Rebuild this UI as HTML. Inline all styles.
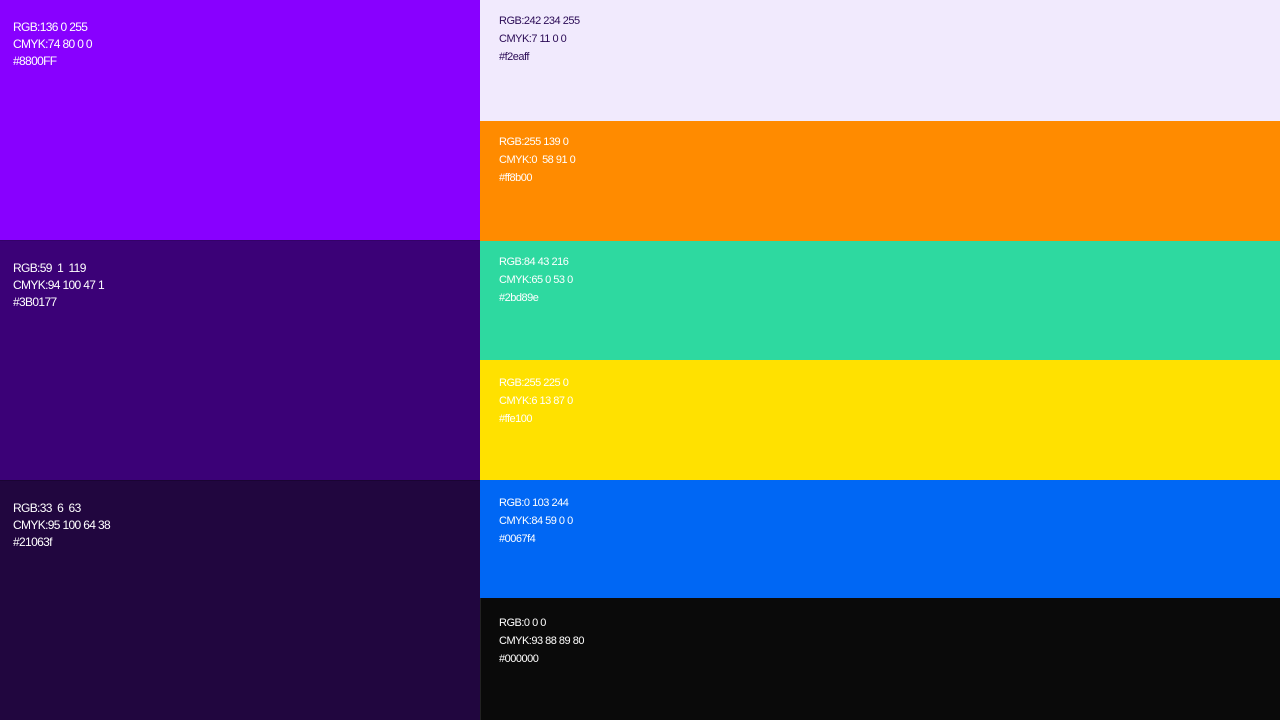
<!DOCTYPE html>
<html><head><style>
body{margin:0;width:1280px;height:720px;position:relative;overflow:hidden;font-family:"Liberation Sans",sans-serif;}
.b{position:absolute;box-sizing:border-box;}
.l{left:0;width:480px;height:240px;padding:19px 0 0 13px;font-size:12px;line-height:17px;color:#fff;letter-spacing:-0.65px}
.r{left:480px;width:800px;padding:12px 0 0 19px;font-size:11px;line-height:18px;color:#fff;letter-spacing:-0.5px}
</style></head><body>
<div class="b l" style="top:0;background:#8800ff">RGB:136 0 255<br>CMYK:74 80 0 0<br>#8800FF</div>
<div class="b l" style="top:240px;background:#3b0177;border-top:1px solid #330168">RGB:59&nbsp; 1&nbsp; 119<br>CMYK:94 100 47 1<br>#3B0177</div>
<div class="b l" style="top:480px;background:#21063f;border-top:1px solid #1a0433">RGB:33&nbsp; 6&nbsp; 63<br>CMYK:95 100 64 38<br>#21063f</div>
<div class="b r" style="top:0;height:121px;background:#f1eafd;color:#2a0a55">RGB:242 234 255<br>CMYK:7 11 0 0<br>#f2eaff</div>
<div class="b r" style="top:121px;height:120px;background:#ff8b00">RGB:255 139 0<br>CMYK:0&nbsp; 58 91 0<br>#ff8b00</div>
<div class="b r" style="top:241px;height:119px;background:#2ed9a0">RGB:84 43 216<br>CMYK:65 0 53 0<br>#2bd89e</div>
<div class="b r" style="top:360px;height:120px;background:#ffe100;padding-top:14px">RGB:255 225 0<br>CMYK:6 13 87 0<br>#ffe100</div>
<div class="b r" style="top:480px;height:118px;background:#0067f4;padding-top:14px">RGB:0 103 244<br>CMYK:84 59 0 0<br>#0067f4</div>
<div class="b r" style="top:598px;height:122px;background:#0a0a0a;border-left:1px solid #222;padding:16px 0 0 18px">RGB:0 0 0<br>CMYK:93 88 89 80<br>#000000</div>
</body></html>
